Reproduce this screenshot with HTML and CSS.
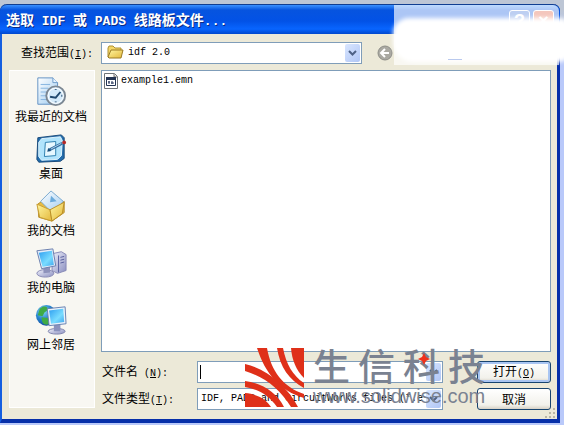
FILE: index.html
```html
<!DOCTYPE html>
<html lang="zh-CN">
<head>
<meta charset="utf-8">
<title>选取 IDF 或 PADS 线路板文件</title>
<link rel="stylesheet" href="styles.css">
</head>
<body>
<svg width="0" height="0" class="defs" aria-hidden="true">
  <defs>
    <linearGradient id="screen" x1="0" y1="0" x2="1" y2="1"><stop offset="0" stop-color="#2d9df0"/><stop offset=".6" stop-color="#79dcff"/><stop offset="1" stop-color="#3fa5ec"/></linearGradient>
    <linearGradient id="paper" x1="0" y1="0" x2="1" y2="1"><stop offset="0" stop-color="#fff"/><stop offset="1" stop-color="#9ccaf0"/></linearGradient>
    <linearGradient id="gold" x1="0" y1="0" x2="1" y2="1"><stop offset="0" stop-color="#fff6a0"/><stop offset="1" stop-color="#e3b73a"/></linearGradient>
    <linearGradient id="case" x1="0" y1="0" x2="1" y2="1"><stop offset="0" stop-color="#f0f1fb"/><stop offset="1" stop-color="#8b8fc0"/></linearGradient>
    <radialGradient id="globe" cx=".35" cy=".3" r=".8"><stop offset="0" stop-color="#8bdcf2"/><stop offset=".5" stop-color="#2583cf"/><stop offset="1" stop-color="#123f93"/></radialGradient>
  </defs>
</svg>
<main class="dialog">
  <header class="titlebar">
    <h1>选取<span class="latin"> IDF </span>或<span class="latin"> PADS </span>线路板文件<span class="latin">...</span></h1>
    <button class="caption" aria-label="帮助">?</button>
    <button class="caption close" aria-label="关闭">×</button>
  </header>
  <form class="content">
    <div class="lookup">
      <label for="folder">查找范围<span class="latin">(<u>I</u>):</span></label>
      <div class="combo">
        <svg class="folder" width="17" height="15" viewBox="0 0 17 15"><path d="M1 12V3l1-2h4l2 2h6v3" fill="#f5d768" stroke="#ae9033"/><path d="M1 12 4 5h12l-2 8H2z" fill="url(#gold)" stroke="#9b7b24"/></svg>
        <select id="folder"><option>idf 2.0</option></select>
        <svg class="arrow" viewBox="0 0 15 18"><path d="m4 7 3.500 3.500L11 7" /></svg>
      </div>
      <button class="back" type="button" aria-label="后退"><svg width="16" height="16" viewBox="0 0 16 16"><circle cx="8" cy="8" r="7" fill="#aaa9a2" stroke="#8e8e88"/><path d="M12 8H4m4-4L4 8l4 4" fill="none" stroke="#fff" stroke-width="2"/></svg></button>
    </div>
    <div class="middle">
      <nav class="places">
        <a href="#recent">
          <svg width="32" height="32" viewBox="0 0 34 34"><path d="M3 2h16l5 5v23H3z" fill="url(#paper)" stroke="#5f8fc2"/><path d="M19 2v5h5" fill="#e7f4ff" stroke="#6c9bc9"/><path d="M6 9h10M6 13h8M6 17h6M6 21h6M6 25h8" stroke="#84b3df"/><circle cx="22" cy="21" r="10" fill="#d4eafa" stroke="#7c8792" stroke-width="2"/><circle cx="22" cy="21" r="8" fill="none" stroke="#fff"/><path d="m16 22 6 1 5-6M22 14v1m0 12v1m6-7h1" fill="none" stroke="#21496f" stroke-width="2"/></svg>
          <span>我最近的文档</span></a>
        <a href="#desktop">
          <svg width="32" height="32" viewBox="0 0 34 34"><path d="m3 5 25-3 3 3v22l-4 3-23 1-2-3z" fill="#226cac" stroke="#164878"/><path d="m7 6 20-2 2 4-1 16-4 4-17 1-3-4V10z" fill="#b1e4fc" stroke="#e6f7ff"/><path d="m11 10 11-1v15l-12 1z" fill="#e7f8ff" stroke="#297cac"/><path d="m15 18 14-7" stroke="#336da0" stroke-width="3"/><path d="m17 17 11-6" stroke="#b5d8ef"/><circle cx="31" cy="10" r="2" fill="#b42928"/><path d="m14 16-1 4 4-1" fill="#154c79"/></svg>
          <span>桌面</span></a>
        <a href="#documents">
          <svg width="32" height="32" viewBox="0 0 34 34"><path d="m3 15 7-5 3 3 14 1 4-2v12l-13 9-14-4z" fill="#e7bb45" stroke="#b48b25"/><path d="M17 1 30 12 19 25 6 12z" fill="url(#paper)" stroke="#78a8ce"/><path d="m17 6 6 6-7 1z" fill="#69aadb"/><path d="m2 15 14 6 2 12-13-4z" fill="url(#gold)" stroke="#c69c32"/><path d="m16 21 15-8-2 12-11 8z" fill="url(#gold)" stroke="#b88c24"/></svg>
          <span>我的文档</span></a>
        <a href="#computer">
          <svg width="32" height="32" viewBox="0 0 34 34"><path d="m19 7 9-2 5 3v17l-9 3-6-3z" fill="url(#case)" stroke="#8587b5"/><path d="M25 9v18m2-16 4-1m-4 4 4-1m-4 4 4-1" stroke="#555d9c"/><ellipse cx="11" cy="28" rx="9" ry="4" fill="url(#case)" stroke="#8789b4"/><path d="M9 20h7v7l-7 1z" fill="#8e92bb"/><path d="m2 4 17-2 3 18-15 3z" fill="#e5edf9" stroke="#657bac"/><path d="m4 6 14-2 2 15-12 2z" fill="url(#screen)"/></svg>
          <span>我的电脑</span></a>
        <a href="#network">
          <svg width="32" height="32" viewBox="0 0 34 34"><circle cx="12" cy="12" r="11" fill="url(#globe)"/><path d="M5 5c6-5 9-1 9 1l-4 3-2 4-5-1zm2 9 7 1 3 4-4 3c-5 0-6-4-6-8z" fill="#3fab45"/><ellipse cx="23" cy="29" rx="9" ry="3" fill="url(#case)" stroke="#7b80aa"/><path d="M20 22h7v7h-7z" fill="#8b92bd"/><path d="m13 5 19-2 1 18-18 2z" fill="#e9f2fb" stroke="#647eaf"/><path d="m15 7 15-2 1 14-14 2z" fill="url(#screen)"/></svg>
          <span>网上邻居</span></a>
      </nav>
      <div class="right">
        <ul class="files">
          <li><svg width="14" height="16" viewBox="0 0 14 16"><path d="M.5.500h10l3 3v12H.5z" fill="#fff" stroke="#6f7478"/><path d="M10 1v3h3" fill="#d7d7d7" stroke="#777"/><path d="M2.500 4.500h9v8h-9z" fill="#fff" stroke="#233453"/><path d="M2 4h10v3H2z" fill="#233453"/><path d="M5 8v3M4 9h2m2-1v3m-1-1h3" stroke="#24345b"/></svg><span class="latin">example1.emn</span></li>
        </ul>
        <div class="fields">
          <label for="name">文件名<span class="latin"> (<u>N</u>):</span></label>
          <div class="combo"><i class="caret"></i><input id="name" type="text"><svg class="arrow" viewBox="0 0 15 18"><path d="m4 7 3.500 3.500L11 7"/></svg></div>
          <button class="push primary" type="button">打开<span class="latin">(<u>O</u>)</span></button>
          <label for="type">文件类型<span class="latin">(<u>T</u>):</span></label>
          <div class="combo"><select id="type"><option>IDF, PADS and CircuitWorks files (*.e</option></select><svg class="arrow" viewBox="0 0 15 18"><path d="m4 7 3.500 3.500L11 7"/></svg></div>
          <button class="push" type="button">取消</button>
        </div>
      </div>
    </div>
  </form>
  <svg class="grip" width="12" height="12" viewBox="0 0 12 12"><path d="M9 1h2v2H9zM5 5h2v2H5zm4 0h2v2H9zM1 9h2v2H1zm4 0h2v2H5zm4 0h2v2H9z" fill="#b9b6a5"/></svg>
</main>
<div class="veil"></div>
<div class="cloud"></div>
<div class="trace"></div>
<aside class="brand">
  <svg width="60" height="60" viewBox="0 0 60 60" fill="#df3019"><path d="M46 0H59V30C51 22 47 12 46 0Z"/><path d="M32 0H38C41 16 48 28 59 35V40C44 32 35 19 32 0Z"/><path d="M12 0H22C26 23 38 39 59 46V50C35 43 20 25 12 0Z"/><path d="M0 16C22 21 42 38 53 59H46C35 41 20 29 0 23Z"/><path d="M0 33C17 35 32 45 39 59H32C24 47 13 41 0 39Z"/><path d="M0 45C12 46 21 51 26 59H0Z"/></svg>
  <div class="words"><div class="company"><span>生</span><span>信</span><span>科</span><span>技</span></div><div class="site">www.solidwise.com</div></div>
  <svg class="spark" width="12" height="12" viewBox="0 0 12 12"><path d="m6 0 2 4 4 2-4 2-2 4-2-4-4-2 4-2z" fill="#ef321d"/></svg>
</aside>
</body>
</html>
```
FILE: styles.css
```css
* { box-sizing: border-box; }
body {
  margin: 0;
  min-height: 100vh;
  padding: 4px 4px 2px 0;
  display: flex;
  position: relative;
  overflow: hidden;
  background: linear-gradient(#bdc6d5 0 10px, #b9c9fa 40px);
  color: #000;
  font: 12px/16px "Noto Sans CJK SC", sans-serif;
}
.defs { position: absolute; }
button, input, select { font: inherit; color: inherit; margin: 0; }
.latin, select, input { font-family: "Liberation Mono", monospace; font-size: 10px; white-space: pre; }
.dialog {
  flex: 1;
  min-width: 0;
  display: flex;
  flex-direction: column;
  position: relative;
  border: solid #062fa9;
  border-width: 0 3px 4px 2px;
  border-left-color: #155fe0;
  border-radius: 7px 7px 0 0;
  background: #ece9d8;
}
.titlebar {
  height: 30px;
  display: flex;
  align-items: center;
  gap: 3px;
  margin: 0 -3px 0 -2px;
  padding: 2px 6px 0;
  border-top: 1px solid #113e91;
  border-radius: 7px 7px 0 0;
  background: linear-gradient(#3b91ff, #0754df 5px, #0252e6 16px, #0865ff 24px, #0148cd);
}
h1 {
  flex: 1;
  margin: 0;
  color: #fff;
  font-size: 14px;
  line-height: 20px;
  font-weight: 700;
  text-shadow: 1px 1px #0a2b85;
  white-space: nowrap;
}
h1 .latin { font-size: 13px; }
.caption {
  width: 21px;
  height: 21px;
  padding: 0;
  border: 1px solid #fff;
  border-radius: 3px;
  background: #386fd8;
  color: #fff;
  font: bold 18px/18px "Liberation Sans", sans-serif;
}
.close { background: #dc5537; }
.content { flex: 1; display: flex; flex-direction: column; padding: 8px 6px 9px 7px; }
.lookup { display: grid; grid-template-columns: 79px minmax(0, 261px) 16px; column-gap: 13px; align-items: center; padding-bottom: 6px; }
.lookup label { padding-left: 12px; white-space: nowrap; }
.lookup .back { margin-left: 2px; }
.combo { position: relative; display: flex; align-items: stretch; height: 22px; padding: 1px; border: 1px solid #7f9db9; background: #fff; min-width: 0; }
.combo select, .combo input { flex: 1; min-width: 0; border: 0; outline: 0; padding: 0 2px; appearance: none; background: transparent; }
.folder { margin: 1px 2px 0 4px; }
.arrow { width: 15px; height: 18px; flex: none; border-radius: 2px; background: linear-gradient(135deg, #d9e6ff, #b0c6f5); pointer-events: none; }
.arrow path { fill: none; stroke: #4d6185; stroke-width: 2; }
.caret { width: 1px; margin: 2px 0 2px 1px; background: #000; }
.back { width: 16px; height: 16px; padding: 0; border: 0; background: none; }
.back svg { display: block; }
.middle { flex: 1; display: flex; gap: 6px; }
.places { width: 86px; padding: 5px 2px 0 0; display: flex; flex-direction: column; gap: 9px; background: #f8f7f2; border: 1px solid #fff; margin-bottom: 2px; }
.places a { display: flex; flex-direction: column; align-items: center; color: #000; text-decoration: none; white-space: nowrap; }
.places svg { display: block; }
.right { flex: 1; min-width: 0; display: flex; flex-direction: column; }
.files { flex: 1; margin: 0; padding: 1px 2px; list-style: none; border: 1px solid #7f9db9; background: #fff; }
.files li { display: flex; align-items: center; gap: 3px; line-height: 18px; }
.fields { display: grid; grid-template-columns: 96px minmax(0, 1fr) 74px; align-items: center; row-gap: 5px; padding-top: 9px; }
.fields label { padding-left: 1px; white-space: nowrap; }
.fields .combo { margin-right: 34px; }
.push { height: 22px; padding: 0; border: 1px solid #17446f; border-radius: 3px; background: linear-gradient(#fff, #f2f1eb 80%, #d7d1c5); line-height: 18px; }
.primary { box-shadow: inset 0 0 0 2px #a9c5f2; }
.grip { position: absolute; right: 1px; bottom: 0; }
.veil { position: absolute; top: 5px; right: 5px; width: 165px; height: 60px; background: #fff; opacity: .67; border-radius: 0 6px 0 0; }
.cloud { position: absolute; top: 18px; right: -6px; width: 177px; height: 44px; border-radius: 16px 10px 10px 20px; background: #fff; filter: blur(2px); }
.trace { position: absolute; right: 102px; top: 59px; width: 14px; height: 1px; background: #b9c9ee; }
.brand { position: absolute; left: 245px; top: 348px; display: flex; gap: 8px; pointer-events: none; }
.words { width: 172px; color: #7a8291; }
.company { display: flex; justify-content: space-between; font-size: 37px; line-height: 34px; font-weight: 500; }
.site { font: 20px/28px "Liberation Sans", sans-serif; }
.spark { position: absolute; left: 173px; top: 5px; }
```
